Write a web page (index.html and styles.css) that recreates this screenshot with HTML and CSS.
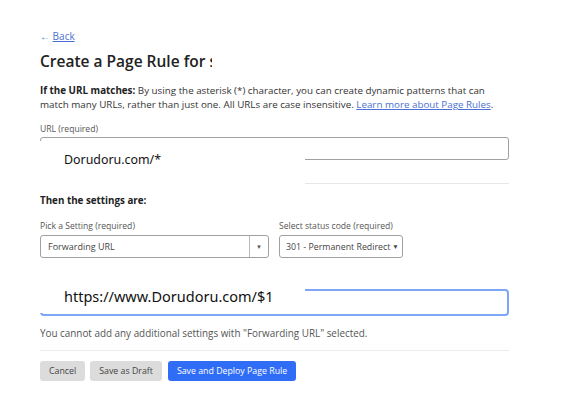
FILE: index.html
```html
<!DOCTYPE html>
<html>
<head>
<meta charset="utf-8">
<link rel="stylesheet" href="styles.css">
</head>
<body>
<div class="page">
  <a class="back" href="#"><span class="arrow">←</span> <span class="ul">Back</span></a>
  <div class="title-wrap">
    <h1 class="title">Create a Page Rule for seo-example.com</h1>
    <div class="cover cover-title"></div>
  </div>
  <p class="intro"><b>If the URL matches:</b> By using the asterisk (*) character, you can create dynamic patterns that can match many URLs, rather than just one. All URLs are case insensitive. <a class="link" href="#">Learn more about Page Rules</a>.</p>

  <div class="url-block">
    <label class="label">URL (required)</label>
    <div class="input"></div>
    <hr class="sep sep-url">
    <div class="cover cover-url"><span class="over-text">Dorudoru.com/*</span></div>
  </div>

  <h2 class="sub">Then the settings are:</h2>
  <div class="row">
    <div class="field field-setting">
      <label class="label">Pick a Setting (required)</label>
      <div class="select">
        <span class="sel-text">Forwarding URL</span>
        <span class="sel-arrow">▼</span>
      </div>
    </div>
    <div class="field field-status">
      <label class="label">Select status code (required)</label>
      <div class="select2">301 - Permanent Redirect <span class="caret">▼</span></div>
    </div>
  </div>

  <div class="fwd-block">
    <div class="input focus"></div>
    <div class="cover cover-fwd"><span class="over-text big">https://www.Dorudoru.com/$1</span></div>
  </div>

  <p class="note">You cannot add any additional settings with "Forwarding URL" selected.</p>
  <hr class="sep sep-bottom">
  <div class="buttons">
    <button class="btn btn-grey">Cancel</button>
    <button class="btn btn-grey">Save as Draft</button>
    <button class="btn btn-blue">Save and Deploy Page Rule</button>
  </div>
</div>
</body>
</html>
```

FILE: styles.css
```css
* { box-sizing: border-box; }
html, body { margin: 0; padding: 0; background: #fff; }
body { font-family: "Open Sans", "Noto Sans", "Liberation Sans", sans-serif; color: #333; }
.page { width: 562px; height: 418px; padding: 29px 53px 0 40px; position: relative; overflow: hidden; }

.back { display: block; width: 40px; font-size: 10px; color: #4b6fd4; text-decoration: none; line-height: 14px; }
.back .arrow { font-size: 10px; }
.back .ul { text-decoration: underline; }

.title-wrap { position: relative; margin-top: 7px; height: 22px; }
.title { margin: 0; font-size: 15.5px; font-weight: 600; color: #222; line-height: 22px; white-space: nowrap; }
.cover { position: absolute; background: #fff; }
.cover-title { left: 172px; top: 0; width: 400px; height: 24px; }

.intro { margin: 12px 0 0; font-size: 9.8px; line-height: 14px; color: #333; }
.intro b { font-weight: 700; color: #222; }
.link { color: #4b6fd4; text-decoration: underline; }

.url-block { position: relative; margin-top: 11px; }
.label { display: block; font-size: 8.6px; line-height: 12px; color: #555; }
.input { margin-top: 2px; height: 23px; border: 1px solid #a0a0a0; border-radius: 3px; background: #fff; }
.sep { border: 0; height: 1px; background: #e6e6e6; margin: 0; }
.sep-url { margin-top: 23px; }
.cover-url { left: -2px; top: 18px; width: 267px; height: 52px; }
.over-text { position: absolute; font-family: "Noto Sans", "Open Sans", sans-serif; font-size: 12.4px; color: #111; white-space: nowrap; }
.over-text.big { font-size: 14.5px; }
.cover-url .over-text { left: 26px; top: 10px; }

.sub { margin: 10px 0 0; font-size: 9.8px; font-weight: 700; color: #222; line-height: 14px; }

.row { display: flex; gap: 10px; margin-top: 12px; }
.field-setting { width: 229px; }
.field-status { width: 124px; }
.select { margin-top: 3px; height: 23px; border: 1px solid #a0a0a0; border-radius: 3px; display: flex; align-items: stretch; }
.sel-text { flex: 1; font-size: 9px; color: #444; padding-left: 7px; display: flex; align-items: center; }
.sel-arrow { width: 19px; border-left: 1px solid #bbb; font-size: 6px; color: #555; display: flex; align-items: center; justify-content: center; }
.select2 { margin-top: 3px; height: 23px; border: 1px solid #a0a0a0; border-radius: 3px; font-size: 8.8px; color: #444; display: flex; align-items: center; padding-left: 6px; white-space: nowrap; }
.caret { font-size: 6.5px; margin-left: 2px; }

.fwd-block { position: relative; margin-top: 31px; }
.input.focus { margin-top: 0; height: 27px; border: 2px solid #7ea6f6; border-radius: 4px; }
.cover-fwd { left: -2px; top: -16px; width: 267px; height: 40px; }
.cover-fwd .over-text { left: 26px; top: 13px; }

.note { margin: 10px 0 0; font-size: 9.9px; line-height: 14px; color: #555; }
.sep-bottom { margin-top: 10px; background: #ececec; }

.buttons { display: flex; gap: 5px; margin-top: 10px; }
.btn { height: 20px; border: 0; border-radius: 3px; font-family: inherit; font-size: 8.8px; padding: 0 9px; cursor: pointer; }
.btn-grey { background: #dcdcdc; color: #444; }
.btn + .btn-blue { margin-left: 1px; }
.btn-blue { background: #2f6df6; color: #fff; }
```
